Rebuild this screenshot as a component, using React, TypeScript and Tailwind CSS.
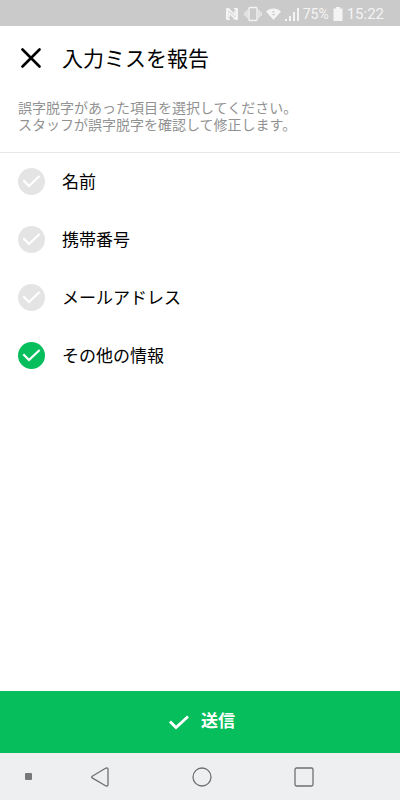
import React from 'react';

const items = [
  { id: 'name', label: '名前' },
  { id: 'phone', label: '携帯番号' },
  { id: 'email', label: 'メールアドレス' },
  { id: 'other', label: 'その他の情報' },
];

const StatusBar: React.FC = () => (
  <div className="flex h-[26px] shrink-0 items-center justify-end bg-[#cacaca] pt-0.5 pr-4 font-['Roboto',sans-serif] text-[#f4f4f4]">
    {/* NFC */}
    <svg className="mr-1.5 h-3 w-3" viewBox="0 0 12 12" fill="currentColor">
      <path d="M0 1.200Q0 0 1.200 0H3l5 5.500V3h1.300v5.500L2.600 2.500v8H4V12H1.200Q0 12 0 10.800z" />
      <path d="M12 10.800Q12 12 10.800 12H9L4 6.500V9H2.700V3.500l6.700 6v-8H8V0h2.800Q12 0 12 1.200z" />
    </svg>
    {/* Vibrate */}
    <svg className="mr-1 h-4 w-[18px]" viewBox="0 0 18 16" fill="none" stroke="currentColor" strokeWidth="1.4">
      <rect x="5" y="1.500" width="8" height="13" rx="1" />
      <path d="M3 4v8M15 4v8M1 6v4M17 6v4" strokeWidth="1.100" />
    </svg>
    {/* Wi-Fi */}
    <svg className="mr-1 h-3 w-[15px]" viewBox="0 0 15 12">
      <path d="M0 3.500C4-.6 11-.6 15 3.500L7.500 12z" fill="currentColor" />
      <path d="M5.800 4.500 7.500 2.800l1.700 1.700zM5.800 6l1.700 1.700L9.200 6z" fill="#cacaca" />
    </svg>
    {/* Signal */}
    <svg className="mr-1 h-[14px] w-[14px]" viewBox="0 0 14 14" fill="currentColor">
      <path d="M0 12h2v2H0zM4 9h2v5H4zM8 5h2v9H8zM12 1h2v13h-2z" />
    </svg>
    <span className="mr-1 text-[14px] leading-5">75%</span>
    {/* Battery */}
    <svg className="mr-1 h-[14px] w-[10px]" viewBox="0 0 10 14" fill="currentColor">
      <path d="M3 0h4v1.500h2.500V14h-9V1.500H3z" />
    </svg>
    <span className="text-[15px] leading-5">15:22</span>
  </div>
);

const Header: React.FC = () => (
  <header className="border-b border-[#e6e6e6] pb-[19px]">
    <div className="flex h-[62px] items-center gap-[21px] px-5">
      <button type="button" aria-label="閉じる">
        <svg className="h-[21px] w-[21px]" viewBox="0 0 21 21" fill="none" stroke="#000" strokeWidth="2.600">
          <path d="M2.500 2.500l17 17M19.500 2.500l-17 17" strokeLinecap="round" />
        </svg>
      </button>
      <h1 className="text-[21px] leading-8">入力ミスを報告</h1>
    </div>
    <p className="px-[18px] pt-[11px] text-[14px] leading-[17px] text-[#929292]">
      誤字脱字があった項目を選択してください。
      <br />
      スタッフが誤字脱字を確認して修正します。
    </p>
  </header>
);

interface CheckItemProps {
  id: string;
  label: string;
  checked: boolean;
  onChange: () => void;
}

const CheckItem: React.FC<CheckItemProps> = ({ id, label, checked, onChange }) => (
  <li>
    <label htmlFor={id} className="flex h-14 items-center gap-[17px] px-[18px]">
      <span className="grid h-[27px] w-[27px]">
        <input
          id={id}
          type="checkbox"
          checked={checked}
          onChange={onChange}
          className="col-start-1 row-start-1 h-full w-full appearance-none rounded-full bg-[#e4e4e4] checked:bg-[#06bf5c]"
        />
        <svg
          className="pointer-events-none col-start-1 row-start-1 h-full w-full"
          viewBox="0 0 27 27"
          fill="none"
          stroke="#fff"
          strokeWidth="2.200"
        >
          <path d="M5.300 12.300l5.700 5.700L21.600 8" />
        </svg>
      </span>
      <span className="text-[17px] leading-6">{label}</span>
    </label>
  </li>
);

const NavigationBar: React.FC = () => (
  <nav className="flex h-[47px] shrink-0 items-center bg-[#eeeff1] text-[#6f7072]">
    <button type="button" aria-label="メニュー" className="flex w-[14%] justify-center">
      <span className="h-[7px] w-[7px] rounded-[1px] bg-[#77787a]"></span>
    </button>
    <button type="button" aria-label="戻る" className="flex w-[22%] justify-center">
      <svg className="h-5 w-5" viewBox="0 0 20 20" fill="none" stroke="currentColor" strokeWidth="1.300">
        <path d="M2.200 9.200 15.500 1.300Q18 .2 18 2.500v15q0 2.300-2.500 1.200L2.200 10.900Q1 10 2.200 9.200z" />
      </svg>
    </button>
    <button type="button" aria-label="ホーム" className="flex w-[29%] justify-center">
      <svg className="h-5 w-5" viewBox="0 0 20 20" fill="none" stroke="currentColor" strokeWidth="1.300">
        <circle cx="10" cy="10" r="9" />
      </svg>
    </button>
    <button type="button" aria-label="履歴" className="flex w-[22%] justify-center">
      <svg className="h-5 w-5" viewBox="0 0 20 20" fill="none" stroke="currentColor" strokeWidth="1.300">
        <rect x="1" y="1" width="18" height="18" rx="1.500" />
      </svg>
    </button>
  </nav>
);

const App: React.FC = () => {
  const [selected, setSelected] = React.useState<string[]>(['other']);

  const toggle = (id: string) =>
    setSelected(selected.includes(id) ? selected.filter((s) => s !== id) : [...selected, id]);

  return (
    <div className="flex min-h-screen flex-col bg-white font-['Noto_Sans_CJK_JP',sans-serif] text-black">
      <StatusBar />
      <Header />
      <form className="flex grow flex-col" onSubmit={(e) => e.preventDefault()}>
        <ul className="flex grow flex-col gap-0.5">
          {items.map((item) => (
            <CheckItem
              key={item.id}
              id={item.id}
              label={item.label}
              checked={selected.includes(item.id)}
              onChange={() => toggle(item.id)}
            />
          ))}
        </ul>
        <button
          type="submit"
          className="flex h-[62px] items-center justify-center gap-3 bg-[#06bf5c] pb-1 pl-1 text-[17px] leading-6 font-bold text-white"
        >
          <svg className="h-5 w-5" viewBox="0 0 20 20" fill="none" stroke="currentColor" strokeWidth="2.800">
            <path d="M1 11.500l6 6L19 6.500" />
          </svg>
          送信
        </button>
      </form>
      <NavigationBar />
    </div>
  );
};

export default App;
